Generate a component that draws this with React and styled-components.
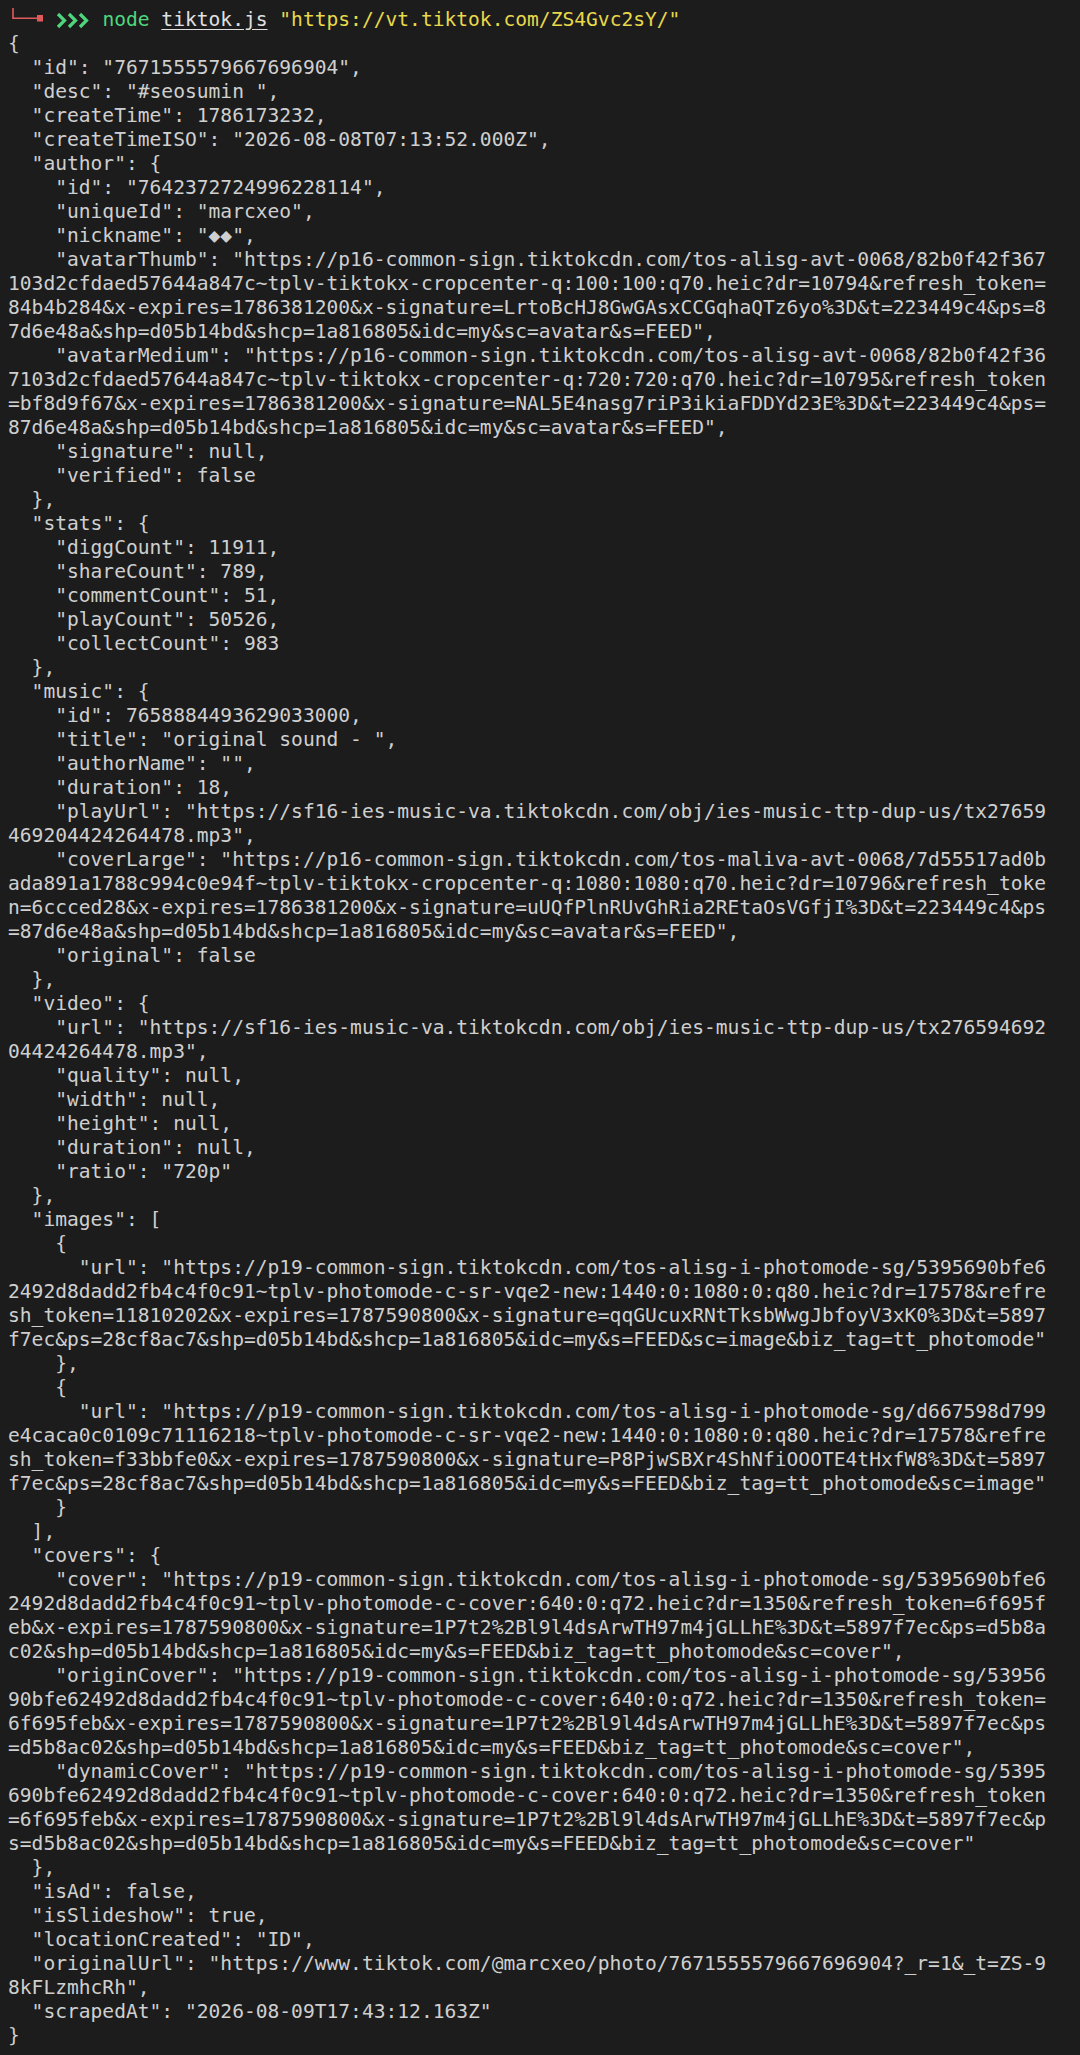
import React from "react";
import styled, { createGlobalStyle } from "styled-components";

const Global = createGlobalStyle`
  html, body {
    margin: 0;
    padding: 0;
    background: #1c1c1c;
  }
  body {
    min-height: 2055px;
  }
`;

const Terminal = styled.main`
  display: flex;
  flex-direction: column;
  padding: 8px 8px 0 8px;
  background: #1c1c1c;
  color: #cfcfcf;
  font-family: "DejaVu Sans Mono", "Liberation Mono", monospace;
  font-size: 19.6px;
  min-height: 2047px;
`;

const Row = styled.div`
  height: 24px;
  line-height: 24px;
  white-space: pre;
  display: flex;
  align-items: center;
`;

const Corner = styled.svg`
  width: 35.4px;
  height: 24px;
  flex: none;
`;

const Gap = styled.span`
  display: inline-block;
  width: 11.8px;
  flex: none;
`;

const Chevrons = styled.svg`
  width: 35.4px;
  height: 24px;
  flex: none;
`;

const Cmd = styled.span`
  color: ${(p) => p.$color || "#cfcfcf"};
  text-decoration: ${(p) => (p.$underline ? "underline" : "none")};
  text-underline-offset: 3px;
`;

const lines = [
  "{",
  '  "id": "7671555579667696904",',
  '  "desc": "#seosumin ",',
  '  "createTime": 1786173232,',
  '  "createTimeISO": "2026-08-08T07:13:52.000Z",',
  '  "author": {',
  '    "id": "7642372724996228114",',
  '    "uniqueId": "marcxeo",',
  '    "nickname": "◆◆",',
  '    "avatarThumb": "https://p16-common-sign.tiktokcdn.com/tos-alisg-avt-0068/82b0f42f367',
  "103d2cfdaed57644a847c~tplv-tiktokx-cropcenter-q:100:100:q70.heic?dr=10794&refresh_token=",
  "84b4b284&x-expires=1786381200&x-signature=LrtoBcHJ8GwGAsxCCGqhaQTz6yo%3D&t=223449c4&ps=8",
  '7d6e48a&shp=d05b14bd&shcp=1a816805&idc=my&sc=avatar&s=FEED",',
  '    "avatarMedium": "https://p16-common-sign.tiktokcdn.com/tos-alisg-avt-0068/82b0f42f36',
  "7103d2cfdaed57644a847c~tplv-tiktokx-cropcenter-q:720:720:q70.heic?dr=10795&refresh_token",
  "=bf8d9f67&x-expires=1786381200&x-signature=NAL5E4nasg7riP3ikiaFDDYd23E%3D&t=223449c4&ps=",
  '87d6e48a&shp=d05b14bd&shcp=1a816805&idc=my&sc=avatar&s=FEED",',
  '    "signature": null,',
  '    "verified": false',
  "  },",
  '  "stats": {',
  '    "diggCount": 11911,',
  '    "shareCount": 789,',
  '    "commentCount": 51,',
  '    "playCount": 50526,',
  '    "collectCount": 983',
  "  },",
  '  "music": {',
  '    "id": 7658884493629033000,',
  '    "title": "original sound - ",',
  '    "authorName": "",',
  '    "duration": 18,',
  '    "playUrl": "https://sf16-ies-music-va.tiktokcdn.com/obj/ies-music-ttp-dup-us/tx27659',
  '469204424264478.mp3",',
  '    "coverLarge": "https://p16-common-sign.tiktokcdn.com/tos-maliva-avt-0068/7d55517ad0b',
  "ada891a1788c994c0e94f~tplv-tiktokx-cropcenter-q:1080:1080:q70.heic?dr=10796&refresh_toke",
  "n=6ccced28&x-expires=1786381200&x-signature=uUQfPlnRUvGhRia2REtaOsVGfjI%3D&t=223449c4&ps",
  '=87d6e48a&shp=d05b14bd&shcp=1a816805&idc=my&sc=avatar&s=FEED",',
  '    "original": false',
  "  },",
  '  "video": {',
  '    "url": "https://sf16-ies-music-va.tiktokcdn.com/obj/ies-music-ttp-dup-us/tx276594692',
  '04424264478.mp3",',
  '    "quality": null,',
  '    "width": null,',
  '    "height": null,',
  '    "duration": null,',
  '    "ratio": "720p"',
  "  },",
  '  "images": [',
  "    {",
  '      "url": "https://p19-common-sign.tiktokcdn.com/tos-alisg-i-photomode-sg/5395690bfe6',
  "2492d8dadd2fb4c4f0c91~tplv-photomode-c-sr-vqe2-new:1440:0:1080:0:q80.heic?dr=17578&refre",
  "sh_token=11810202&x-expires=1787590800&x-signature=qqGUcuxRNtTksbWwgJbfoyV3xK0%3D&t=5897",
  'f7ec&ps=28cf8ac7&shp=d05b14bd&shcp=1a816805&idc=my&s=FEED&sc=image&biz_tag=tt_photomode"',
  "    },",
  "    {",
  '      "url": "https://p19-common-sign.tiktokcdn.com/tos-alisg-i-photomode-sg/d667598d799',
  "e4caca0c0109c71116218~tplv-photomode-c-sr-vqe2-new:1440:0:1080:0:q80.heic?dr=17578&refre",
  "sh_token=f33bbfe0&x-expires=1787590800&x-signature=P8PjwSBXr4ShNfiOOOTE4tHxfW8%3D&t=5897",
  'f7ec&ps=28cf8ac7&shp=d05b14bd&shcp=1a816805&idc=my&s=FEED&biz_tag=tt_photomode&sc=image"',
  "    }",
  "  ],",
  '  "covers": {',
  '    "cover": "https://p19-common-sign.tiktokcdn.com/tos-alisg-i-photomode-sg/5395690bfe6',
  "2492d8dadd2fb4c4f0c91~tplv-photomode-c-cover:640:0:q72.heic?dr=1350&refresh_token=6f695f",
  "eb&x-expires=1787590800&x-signature=1P7t2%2Bl9l4dsArwTH97m4jGLLhE%3D&t=5897f7ec&ps=d5b8a",
  'c02&shp=d05b14bd&shcp=1a816805&idc=my&s=FEED&biz_tag=tt_photomode&sc=cover",',
  '    "originCover": "https://p19-common-sign.tiktokcdn.com/tos-alisg-i-photomode-sg/53956',
  "90bfe62492d8dadd2fb4c4f0c91~tplv-photomode-c-cover:640:0:q72.heic?dr=1350&refresh_token=",
  "6f695feb&x-expires=1787590800&x-signature=1P7t2%2Bl9l4dsArwTH97m4jGLLhE%3D&t=5897f7ec&ps",
  '=d5b8ac02&shp=d05b14bd&shcp=1a816805&idc=my&s=FEED&biz_tag=tt_photomode&sc=cover",',
  '    "dynamicCover": "https://p19-common-sign.tiktokcdn.com/tos-alisg-i-photomode-sg/5395',
  "690bfe62492d8dadd2fb4c4f0c91~tplv-photomode-c-cover:640:0:q72.heic?dr=1350&refresh_token",
  "=6f695feb&x-expires=1787590800&x-signature=1P7t2%2Bl9l4dsArwTH97m4jGLLhE%3D&t=5897f7ec&p",
  's=d5b8ac02&shp=d05b14bd&shcp=1a816805&idc=my&s=FEED&biz_tag=tt_photomode&sc=cover"',
  "  },",
  '  "isAd": false,',
  '  "isSlideshow": true,',
  '  "locationCreated": "ID",',
  '  "originalUrl": "https://www.tiktok.com/@marcxeo/photo/7671555579667696904?_r=1&_t=ZS-9',
  '8kFLzmhcRh",',
  '  "scrapedAt": "2026-08-09T17:43:12.163Z"',
  "}",
];

function Prompt() {
  return (
    <Row>
      <Corner viewBox="0 0 35.4 24">
        <path d="M5 0 V10.3 H30" stroke="#e05a5a" strokeWidth="1.6" fill="none" />
        <rect x="29" y="7" width="7" height="6.5" fill="#e05a5a" />
      </Corner>
      <Gap />
      <Chevrons viewBox="0 0 35.4 24">
        {[3, 14, 25].map((x) => (
          <path
            key={x}
            d={`M${x} 6 L${x + 6.5} 12.5 L${x} 19`}
            stroke="#4fd67d"
            strokeWidth="3.2"
            fill="none"
            strokeLinejoin="miter"
          />
        ))}
      </Chevrons>
      <Gap />
      <Cmd $color="#4fd67d">node</Cmd>
      <Gap />
      <Cmd $color="#e0e0e0" $underline>tiktok.js</Cmd>
      <Gap />
      <Cmd $color="#e8d84a">"https://vt.tiktok.com/ZS4Gvc2sY/"</Cmd>
    </Row>
  );
}

export default function App() {
  return (
    <>
      <Global />
      <Terminal>
        <Prompt />
        {lines.map((l, i) => (
          <Row key={i}>{l}</Row>
        ))}
      </Terminal>
    </>
  );
}
